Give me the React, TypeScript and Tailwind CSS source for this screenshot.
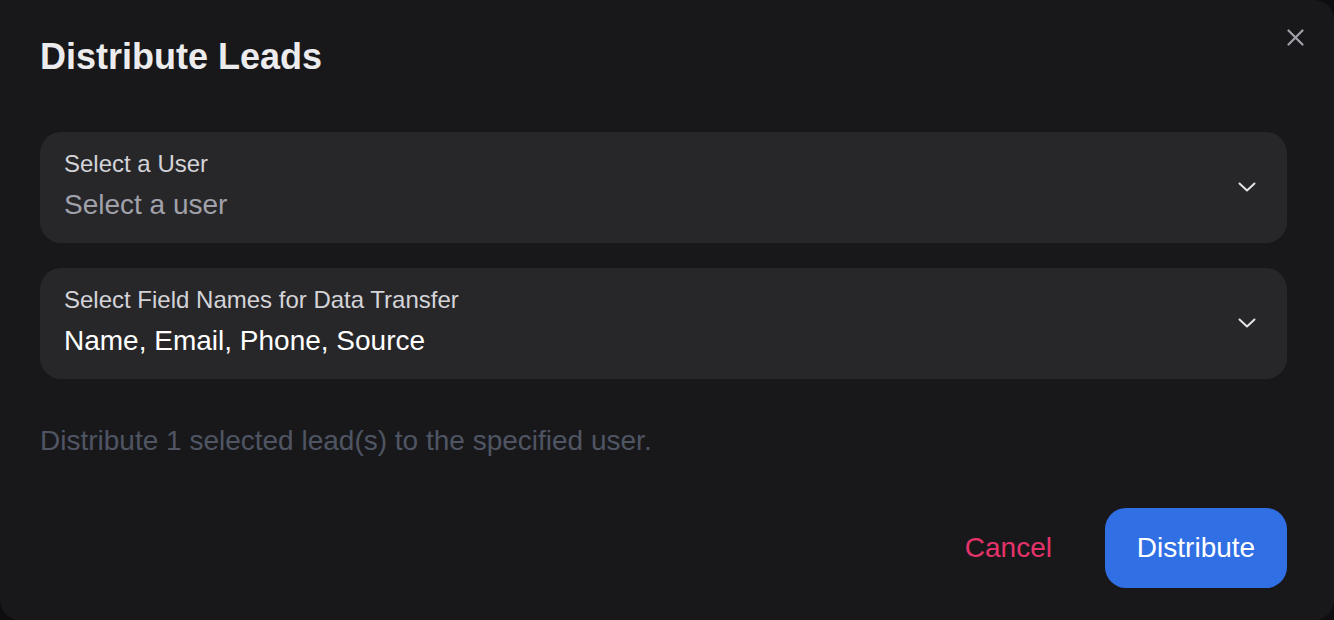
import { useState } from "react";

// 選択ボックス
function SelectBox({ label, value, placeholder }: { label: string; value?: string; placeholder: string }) {
  return (
    <button
      type="button"
      className="flex w-full items-center justify-between rounded-[21px] bg-[#27272a] pl-6 pr-[31px] pt-[18px] pb-[22px] text-left"
    >
      <div className="flex flex-col gap-[11px]">
        <span className="text-[24px] leading-[28px] text-[#d4d4d8]">{label}</span>
        {value ? (
          <span className="text-[28px] leading-[32px] text-white">{value}</span>
        ) : (
          <span className="text-[28px] leading-[32px] text-[#a1a1aa]">{placeholder}</span>
        )}
      </div>
      <svg width="18" height="12" viewBox="0 0 18 12" fill="none" className="mt-[2px]">
        <path d="M1.5 2.5 L9 9.5 L16.5 2.5" stroke="#e4e4e7" strokeWidth="2" strokeLinecap="round" strokeLinejoin="round" />
      </svg>
    </button>
  );
}

export default function App() {
  const [selected] = useState(1);

  return (
    <div className="h-[620px] w-full bg-[#0e0e10] font-['Liberation_Sans',Arial,sans-serif]">
      <div className="relative flex h-full w-full flex-col rounded-tr-[20px] rounded-b-[20px] bg-[#18181b] pl-10 pr-[47px] pt-[37px] pb-8">
        <button type="button" className="absolute right-[28px] top-[27px] p-[2px]">
          <svg width="17" height="17" viewBox="0 0 17 17" fill="none">
            <path d="M1.5 1.5 L15.5 15.5 M15.5 1.5 L1.5 15.5" stroke="#a1a1aa" strokeWidth="2.2" strokeLinecap="round" />
          </svg>
        </button>

        <h1 className="text-[36px] leading-[40px] font-bold text-[#ececee]">Distribute Leads</h1>

        <div className="mt-[55px] flex flex-col gap-[25px]">
          <SelectBox label="Select a User" placeholder="Select a user" />
          <SelectBox label="Select Field Names for Data Transfer" placeholder="" value="Name, Email, Phone, Source" />
        </div>

        <p className="mt-[46px] text-[28px] leading-[32px] text-[#4f5563]">
          Distribute {selected} selected lead(s) to the specified user.
        </p>

        <div className="mt-auto flex items-center justify-end gap-[53px]">
          <button type="button" className="text-[28px] leading-[32px] text-[#e5336a]">Cancel</button>
          <button
            type="button"
            className="flex h-[80px] w-[182px] items-center justify-center rounded-[21px] bg-[#306fe4] text-[28px] leading-[32px] text-white"
          >
            Distribute
          </button>
        </div>
      </div>
    </div>
  );
}
